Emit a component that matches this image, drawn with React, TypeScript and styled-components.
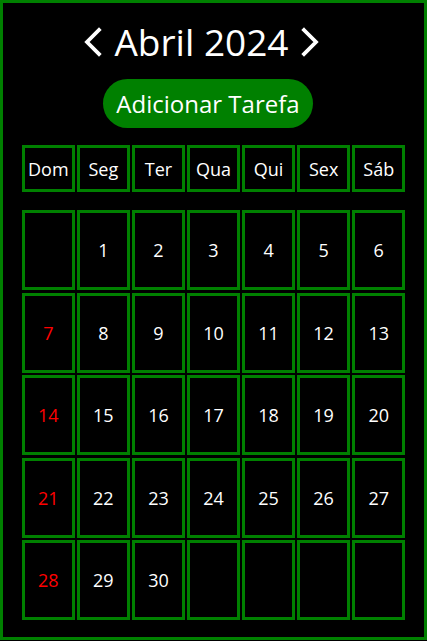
import React from "react";
import styled, { createGlobalStyle } from "styled-components";

const Global = createGlobalStyle`
  html, body { margin: 0; padding: 0; background: #000; }
  body { font-family: "Open Sans", "Noto Sans", sans-serif; color: #fff; }
  * { box-sizing: border-box; }
`;

const Frame = styled.div`
  width: 427px;
  height: 640px;
  border: 3px solid #008000;
  background: #000;
  display: flex;
  flex-direction: column;
  align-items: center;
  padding-top: 15px;
`;

const TitleRow = styled.div`
  display: flex;
  align-items: center;
  gap: 12px;
  height: 48px;
  margin-right: 24px;
`;

const Title = styled.h1`
  margin: 0;
  font-size: 37px;
  font-weight: 400;
  line-height: 48px;
  color: #fff;
`;

const Arrow = styled.button`
  background: none;
  border: none;
  padding: 0;
  display: flex;
  cursor: pointer;
`;

const AddButton = styled.button`
  margin-top: 13px;
  margin-right: 11px;
  width: 210px;
  height: 49px;
  border: none;
  border-radius: 25px;
  background: #008000;
  color: #fff;
  font-family: "Open Sans", "Noto Sans", sans-serif;
  font-size: 24px;
  padding: 0;
  cursor: pointer;
`;

const Grid = styled.div<{ $rowH: number; $top: number }>`
  width: 383px;
  margin-top: ${(p) => p.$top}px;
  display: grid;
  grid-template-columns: repeat(7, 1fr);
  grid-auto-rows: ${(p) => p.$rowH}px;
  gap: 2.5px;
`;

const Cell = styled.div<{ $sunday?: boolean }>`
  border: 3px solid #008000;
  display: flex;
  align-items: center;
  justify-content: center;
  font-size: 18px;
  color: ${(p) => (p.$sunday ? "#ff0000" : "#fff")};
`;

const Chevron = ({ dir }: { dir: "left" | "right" }) => (
  <svg width="19" height="30" viewBox="0 0 19 30">
    <polyline
      points={dir === "left" ? "16,3 4,15 16,27" : "3,3 15,15 3,27"}
      fill="none"
      stroke="#fff"
      strokeWidth="3.8"
      strokeLinecap="square"
    />
  </svg>
);

const weekdays = ["Dom", "Seg", "Ter", "Qua", "Qui", "Sex", "Sáb"];

export default function App() {
  const cells: (number | null)[] = [null];
  for (let d = 1; d <= 30; d++) cells.push(d);
  while (cells.length < 35) cells.push(null);

  return (
    <>
      <Global />
      <Frame>
        <TitleRow>
          <Arrow aria-label="Mês anterior">
            <Chevron dir="left" />
          </Arrow>
          <Title>Abril 2024</Title>
          <Arrow aria-label="Próximo mês">
            <Chevron dir="right" />
          </Arrow>
        </TitleRow>
        <AddButton>Adicionar Tarefa</AddButton>
        <Grid $rowH={47} $top={17}>
          {weekdays.map((w) => (
            <Cell key={w}>{w}</Cell>
          ))}
        </Grid>
        <Grid $rowH={80} $top={18}>
          {cells.map((d, i) => (
            <Cell key={i} $sunday={i % 7 === 0}>
              {d ?? ""}
            </Cell>
          ))}
        </Grid>
      </Frame>
    </>
  );
}
